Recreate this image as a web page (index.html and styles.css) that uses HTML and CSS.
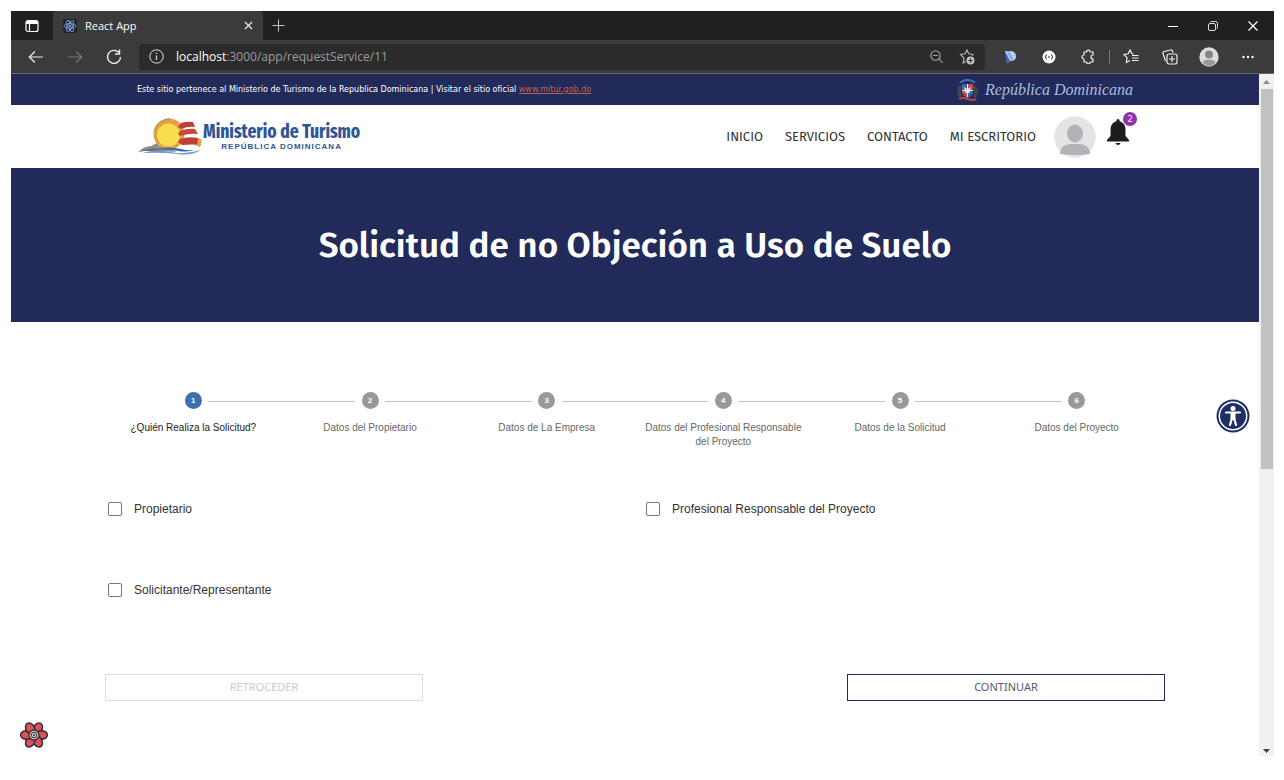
FILE: index.html
```html
<!DOCTYPE html>
<html lang="es">
<head>
    <meta charset="UTF-8">
    <title>React App</title>
    <link rel="stylesheet" href="styles.css">
</head>
<body>
    <div class="window">
        <div class="tabbar">
            <button class="icon-btn tab-actions" aria-label="Acciones de pestaña">
                <svg width="14" height="14" viewBox="0 0 14 14" fill="none" stroke="#fff" stroke-width="1.2"><rect x="1" y="1.500" width="12" height="11" rx="2"/><path d="M1 4.500h12M4.500 4.500v8"/><path d="M1.500 3h11" stroke-width="2"/></svg>
            </button>
            <div class="tab">
                <svg width="14" height="14" viewBox="0 0 14 14" fill="none" stroke="#7fa3dd" stroke-width="0.900"><rect width="14" height="14" fill="#20232a" stroke="none"/><ellipse cx="7" cy="7" rx="6" ry="2.400"/><ellipse cx="7" cy="7" rx="6" ry="2.400" transform="rotate(60 7 7)"/><ellipse cx="7" cy="7" rx="6" ry="2.400" transform="rotate(120 7 7)"/><circle cx="7" cy="7" r="1" fill="#7fa3dd"/></svg>
                <span class="tab-title">React App</span>
                <button class="icon-btn" aria-label="Cerrar pestaña">
                    <svg width="9" height="9" viewBox="0 0 9 9" stroke="#e8e8e8" stroke-width="1.300"><path d="M1 1l7 7M8 1l-7 7"/></svg>
                </button>
            </div>
            <button class="icon-btn new-tab" aria-label="Nueva pestaña">
                <svg width="13" height="13" viewBox="0 0 13 13" stroke="#c8c8c8"><path d="M6.500 0.500v12M0.500 6.500h12"/></svg>
            </button>
            <div class="win-controls">
                <button class="icon-btn" aria-label="Minimizar">
                    <svg width="10" height="10" viewBox="0 0 10 10" stroke="#fff"><path d="M0 5.500h10"/></svg>
                </button>
                <button class="icon-btn" aria-label="Restaurar">
                    <svg width="10" height="10" viewBox="0 0 10 10" fill="none" stroke="#ddd"><rect x="0.500" y="2.500" width="7" height="7" rx="1.500"/><path d="M2.500 1.500q0-1 1-1h4q2 0 2 2v4q0 1-1 1"/></svg>
                </button>
                <button class="icon-btn" aria-label="Cerrar">
                    <svg width="10" height="10" viewBox="0 0 10 10" stroke="#fff" stroke-width="1.200"><path d="M0.500 0.500l9 9M9.500 0.500l-9 9"/></svg>
                </button>
            </div>
        </div>
        <div class="toolbar">
            <div class="nav-buttons">
                <button class="icon-btn" aria-label="Atrás">
                    <svg width="16" height="14" viewBox="0 0 16 14" fill="none" stroke="#eee" stroke-width="1.200"><path d="M15 7H1.500M7 1.500L1.200 7L7 12.500"/></svg>
                </button>
                <button class="icon-btn" aria-label="Adelante">
                    <svg width="16" height="14" viewBox="0 0 16 14" fill="none" stroke="#777" stroke-width="1.200"><path d="M1 7h13.500M9 1.500l5.800 5.500L9 12.500"/></svg>
                </button>
                <button class="icon-btn" aria-label="Actualizar">
                    <svg width="16" height="16" viewBox="0 0 16 16" fill="none" stroke="#eee" stroke-width="1.400"><path d="M14.500 8A6.500 6.500 0 1 1 12.800 3.500M13.500 0.500v4.500H9"/></svg>
                </button>
            </div>
            <div class="address">
                <svg width="15" height="15" viewBox="0 0 15 15" fill="none" stroke="#ddd"><circle cx="7.500" cy="7.500" r="6.700"/><path d="M7.500 6.500v4.500M7.500 3.800v1.300" stroke-width="1.200"/></svg>
                <span class="url"><b>localhost</b>:3000/app/requestService/11</span>
                <button class="icon-btn" aria-label="Zoom">
                    <svg width="13" height="14" viewBox="0 0 13 14" fill="none" stroke="#a5a5ad" stroke-width="1.100"><circle cx="5.500" cy="5.500" r="4.700"/><path d="M3 5.500h5M9 9l3.500 4"/></svg>
                </button>
                <button class="icon-btn" aria-label="Agregar a favoritos">
                    <svg width="16" height="16" viewBox="0 0 16 16" fill="none" stroke="#b5b5bd" stroke-width="1.100"><path d="M13 6.500l1-1-4.200-.700L8 1L6.200 4.800L1.500 5.500L5 9l-.900 5L7 12.500"/><circle cx="11.500" cy="11.500" r="4" fill="#c4c4c4" stroke="none"/><path d="M11.500 9.300v4.400M9.300 11.500h4.400" stroke="#2b2b2b"/></svg>
                </button>
            </div>
            <div class="extensions">
                <button class="icon-btn" aria-label="Extensión">
                    <svg width="13" height="14" viewBox="0 0 13 14"><path d="M1 1h5q6 0 6 5.500Q12 11 6 11L3.500 13z" fill="#b8cdf0"/><path d="M1 1l5 10-3.500 2.500z" fill="#4465a8"/><path d="M3 1l4 9.500 2.500-.500L5 1z" fill="#86a5da"/></svg>
                </button>
                <button class="icon-btn" aria-label="Extensión JSON">
                    <svg width="14" height="14" viewBox="0 0 14 14" fill="none" stroke="#222"><circle cx="7" cy="7" r="6.500" fill="#fff" stroke="none"/><path d="M4.500 4.500Q2.500 7 4.500 9.500M9.500 4.500q2 2.500 0 5M6 7h2"/></svg>
                </button>
                <button class="icon-btn" aria-label="Extensiones">
                    <svg width="14" height="15" viewBox="0 0 14 15" fill="none" stroke="#eee" stroke-width="1.200"><path d="M3 3h2.500a1.800 1.800 0 0 1 3.600 0H12v3a1.800 1.800 0 0 0 0 4v3H9.200a1.800 1.800 0 0 1-3.600 0H3v-3a1.900 1.900 0 0 1 0-4z"/></svg>
                </button>
                <span class="divider"></span>
                <button class="icon-btn" aria-label="Favoritos">
                    <svg width="16" height="15" viewBox="0 0 16 15" fill="none" stroke="#eee" stroke-width="1.200"><path d="M10.500 5L9 4.700L7 1L5.200 4.800L1 5.500L4 8.700L3.400 13.500L7 11.500M9 6.500h6.500M9 9h6.500M9 11.500h6.500"/></svg>
                </button>
                <button class="icon-btn" aria-label="Colecciones">
                    <svg width="16" height="16" viewBox="0 0 16 16" fill="none" stroke="#eee" stroke-width="1.200"><path d="M3.500 12L1 4.500q-.500-1.500 1-2L8.500 1q1.500-.500 2 1l.500 1.500"/><rect x="5" y="5" width="10" height="10" rx="2"/><path d="M10 7v6M7 10h6"/></svg>
                </button>
                <button class="icon-btn" aria-label="Perfil">
                    <svg width="20" height="20" viewBox="0 0 20 20"><circle cx="10" cy="10" r="9.700" fill="#ddd"/><circle cx="10" cy="7.500" r="4" fill="#858585"/><path d="M3.500 15q2-2.500 6.500-2.500t6.500 2.500q-2 4-6.500 4t-6.500-4z" fill="#9a9a9a"/></svg>
                </button>
                <button class="icon-btn" aria-label="Más opciones">
                    <svg width="14" height="4" viewBox="0 0 14 4" fill="#fff"><circle cx="2.500" cy="2" r="1.200"/><circle cx="7" cy="2" r="1.200"/><circle cx="11.500" cy="2" r="1.200"/></svg>
                </button>
            </div>
        </div>
        <div class="viewport">
            <div class="page">
                <div class="topbar">
                    <p>Este sitio pertenece al Ministerio de Turismo de la Republica Dominicana | Visitar el sitio oficial <a href="#">www.mitur.gob.do</a></p>
                    <div class="country">
                        <svg width="21" height="22" viewBox="0 0 21 22" fill="none"><path d="M3 3.500Q10.500-1.500 18 3.500" stroke="#3c75b8" stroke-width="2"/><path d="M4 7Q0 12 4 18M17 7q4 5 0 11" stroke="#45454a" stroke-width="3.500"/><path d="M5 5h11v9q-2 4-5.500 5Q7 18 5 14z" fill="#3d62aa"/><path d="M11 5h5v6h-5zM5 11h5v7q-4-2-5-5z" fill="#c94848"/><path d="M10.500 5v13M5 11.500h11" stroke="#e9edf5"/><path d="M7 8l3.500 2L14 8l-1.500 6h-4z" fill="#dce5f2"/><path d="M2 20q4-2 8.500 0t8.500 0" stroke="#bd4343" stroke-width="2"/></svg>
                        <span>República Dominicana</span>
                    </div>
                </div>
                <header class="header">
                    <a href="#" class="brand">
                        <svg width="66" height="38" viewBox="0 0 66 38"><path d="M1 34q6-6 13-6l6-3 2 3q10 2 18 6l-18-1q-10-1-21 1z" fill="#8b8f94"/><circle cx="32" cy="16" r="15.500" fill="#e5a043"/><path d="M17 14Q20 2 33 0.500" fill="none" stroke="#a08d70"/><circle cx="31.500" cy="17" r="11.500" fill="#f5df4d"/><path d="M44 5q6-2 12-1l2 5q-7-1-14 2l-3-2z" fill="#bd3f38"/><path d="M43 13q8-3 15-2l3 5q-8-1-18 2l-2-2z" fill="#c9473a"/><path d="M43 21q9-3 18-1l3 7q-9-1-19 0l-4-3z" fill="#bd3f38"/><path d="M61 20l4 2-2 7-3-1z" fill="#e5a043"/><path d="M5 35q14-4 28-1t31-2q-10 6-24 4T5 35z" fill="#6e9bd0"/><path d="M19 31q13-3 25 0t17-1q-9 5-19 3t-23-2z" fill="#3767a8"/><path d="M4 33l12-3 9 2-12 1z" fill="#6c6c6c"/></svg>
                        <span class="brand-text">
                            <span class="brand-name">Ministerio de Turismo</span>
                            <span class="brand-sub">REPÚBLICA DOMINICANA</span>
                        </span>
                    </a>
                    <nav class="menu">
                        <a href="#">INICIO</a>
                        <a href="#">SERVICIOS</a>
                        <a href="#">CONTACTO</a>
                        <a href="#">MI ESCRITORIO</a>
                    </nav>
                    <button class="icon-btn avatar" aria-label="Mi cuenta">
                        <svg width="42" height="42" viewBox="0 0 42 42"><circle cx="21" cy="21" r="20.700" fill="#e2e4e6"/><ellipse cx="21" cy="17.500" rx="8" ry="9" fill="#b2b3b6"/><path d="M6 38q0-9 10-10h10q10 1 10 10-6 1-15 1T6 38z" fill="#b2b3b6"/></svg>
                    </button>
                    <button class="icon-btn bell" aria-label="Notificaciones">
                        <svg width="22" height="26" viewBox="0 0 22 26" fill="#1d1d1d"><path d="M11 0q1.700 0 1.700 2.200Q18.500 4 18.500 11v6l3.500 4v1.500H0V21l3.500-4v-6Q3.500 4 9.300 2.200 9.300 0 11 0zM8.500 24h5q-.500 2-2.500 2t-2.500-2z"/></svg>
                        <span class="badge">2</span>
                    </button>
                </header>
                <div class="hero">
                    <h1>Solicitud de no Objeción a Uso de Suelo</h1>
                </div>
                <form class="content">
                    <ol class="stepper">
                        <li class="step active"><span class="step-num">1</span><span class="step-label">¿Quién Realiza la Solicitud?</span></li>
                        <li class="step"><span class="step-num">2</span><span class="step-label">Datos del Propietario</span></li>
                        <li class="step"><span class="step-num">3</span><span class="step-label">Datos de La Empresa</span></li>
                        <li class="step"><span class="step-num">4</span><span class="step-label">Datos del Profesional Responsable del Proyecto</span></li>
                        <li class="step"><span class="step-num">5</span><span class="step-label">Datos de la Solicitud</span></li>
                        <li class="step"><span class="step-num">6</span><span class="step-label">Datos del Proyecto</span></li>
                    </ol>
                    <div class="options">
                        <label><input type="checkbox" name="propietario">Propietario</label>
                        <label><input type="checkbox" name="profesional">Profesional Responsable del Proyecto</label>
                        <label><input type="checkbox" name="solicitante">Solicitante/Representante</label>
                    </div>
                    <div class="actions">
                        <button type="button" disabled>RETROCEDER</button>
                        <button type="button">CONTINUAR</button>
                    </div>
                </form>
                <button class="icon-btn accessibility" aria-label="Accesibilidad">
                    <svg width="34" height="34" viewBox="0 0 34 34"><circle cx="17" cy="17" r="16.500" fill="#1f2f66"/><circle cx="17" cy="17" r="13.700" fill="none" stroke="#fff" stroke-width="1.500"/><circle cx="17" cy="9.500" r="2.500" fill="#fff"/><path d="M10 13.500h14M17 14v6M16 19l-2 7M18 19l2 7" stroke="#fff" stroke-width="2.200" stroke-linecap="round"/><path d="M14.500 13.500h5v7h-5z" fill="#fff"/></svg>
                </button>
                <button class="icon-btn devtools" aria-label="React Query Devtools">
                    <svg width="28" height="28" viewBox="0 0 28 28"><g fill="#e54d50" stroke="#2a3044" stroke-width="1.500"><ellipse cx="14" cy="6.500" rx="4.300" ry="5.900" transform="rotate(30 14 14)"/><ellipse cx="14" cy="6.500" rx="4.300" ry="5.900" transform="rotate(90 14 14)"/><ellipse cx="14" cy="6.500" rx="4.300" ry="5.900" transform="rotate(150 14 14)"/><ellipse cx="14" cy="6.500" rx="4.300" ry="5.900" transform="rotate(210 14 14)"/><ellipse cx="14" cy="6.500" rx="4.300" ry="5.900" transform="rotate(270 14 14)"/><ellipse cx="14" cy="6.500" rx="4.300" ry="5.900" transform="rotate(330 14 14)"/></g><circle cx="14" cy="14" r="5" fill="#d8c9b0" stroke="#2a3044" stroke-width="1.300"/><circle cx="14" cy="14" r="2.800" fill="none" stroke="#2a3044"/><circle cx="14" cy="14" r="1" fill="#2a3044"/></svg>
                </button>
            </div>
            <div class="scrollbar">
                <svg width="7" height="4" viewBox="0 0 7 4" fill="#8a8a8a"><path d="M0 4l3.500-4L7 4z"/></svg>
                <div class="track"><div class="thumb"></div></div>
                <svg width="7" height="4" viewBox="0 0 7 4" fill="#444"><path d="M0 0l3.500 4L7 0z"/></svg>
            </div>
        </div>
    </div>
</body>
</html>
```
FILE: styles.css
```css
*{
    box-sizing: border-box;
    margin: 0;
    padding: 0;
}
body{
    height: 100vh;
    padding: 11px 10px 24px 11px;
    background-color: white;
    font-family: "Liberation Sans", Arial, sans-serif;
}
svg{
    display: block;
    flex-shrink: 0;
}
.icon-btn{
    display: flex;
    align-items: center;
    justify-content: center;
    background: none;
    border: 0;
}
.window{
    display: flex;
    flex-direction: column;
    height: 100%;
}

/* browser chrome */
.tabbar{
    display: flex;
    align-items: center;
    height: 29px;
    background-color: #202020;
}
.tab-actions{
    width: 42px;
}
.tab{
    display: flex;
    align-items: center;
    gap: 8px;
    width: 210px;
    height: 100%;
    padding: 0 10px;
    border-radius: 4px 4px 0 0;
    background-color: #3b3b3b;
    color: white;
    font: 11px "Open Sans", "Noto Sans", sans-serif;
}
.tab-title{
    flex: 1;
}
.new-tab{
    width: 30px;
}
.win-controls{
    display: flex;
    gap: 30px;
    margin-left: auto;
    padding-right: 16px;
}
.toolbar{
    display: flex;
    align-items: center;
    height: 34px;
    background-color: #3b3b3b;
    border-bottom: 1px solid #66666c;
}
.nav-buttons{
    display: flex;
    gap: 23px;
    padding: 0 17px;
}
.address{
    display: flex;
    align-items: center;
    gap: 16px;
    flex: 1;
    height: 26px;
    padding: 0 10px;
    border-radius: 3px;
    background-color: #2b2b2b;
    color: #9b9b9b;
    font: 12px "Open Sans", "Noto Sans", sans-serif;
}
.url{
    flex: 1;
    margin-left: -4px;
}
.url b{
    color: white;
    font-weight: 400;
}
.extensions{
    display: flex;
    align-items: center;
    gap: 19px;
    padding: 0 16px 0 15px;
}
.extensions .icon-btn{
    width: 20px;
}
.divider{
    width: 1px;
    height: 14px;
    margin: 0 -8px;
    background-color: #77777c;
}

/* page */
.viewport{
    display: flex;
    flex: 1;
    min-height: 0;
}
.page{
    position: relative;
    flex: 1;
}
.topbar{
    display: flex;
    align-items: center;
    justify-content: space-between;
    height: 31px;
    padding: 0 126px;
    background-color: #222a59;
    color: white;
    font: 8px "DejaVu Sans", sans-serif;
}
.topbar a{
    color: #c75f4c;
}
.country{
    display: flex;
    align-items: center;
    gap: 7px;
    color: #a9bddd;
    font: italic 16px "Edwardian Script ITC", "Liberation Serif", serif;
}
.header{
    display: flex;
    align-items: center;
    height: 63px;
    padding: 0 130px 0 126px;
}
.brand{
    display: flex;
    align-items: center;
    color: #2f5597;
    text-decoration: none;
}
.brand-text{
    display: flex;
    flex-direction: column;
    align-items: center;
}
.brand-name{
    font: bold 19px/20px "Fira Sans Extra Condensed", "Fira Sans Condensed", "Roboto Condensed", "Open Sans Condensed", sans-serif;
}
.brand-sub{
    font-size: 8px;
    font-weight: bold;
    line-height: 10px;
    letter-spacing: 1px;
}
.menu{
    display: flex;
    gap: 22px;
    margin-left: auto;
    font: 13px "Fira Sans", "Noto Sans", sans-serif;
}
.menu a{
    color: #333;
    text-decoration: none;
}
.avatar{
    margin: 0 11px 0 18px;
}
.bell{
    position: relative;
    margin-bottom: 9px;
}
.badge{
    position: absolute;
    top: -7px;
    right: -8px;
    width: 14px;
    border-radius: 50%;
    background-color: #8e35ad;
    color: white;
    font: 9px/14px "Noto Sans", sans-serif;
    text-align: center;
}
.hero{
    display: flex;
    align-items: center;
    justify-content: center;
    height: 154px;
    background-color: #222a59;
    color: white;
}
.hero h1{
    font: 600 35px "Fira Sans", "Noto Sans", sans-serif;
}
.content{
    padding: 70px 94px 0;
}
.stepper{
    display: flex;
    list-style: none;
    min-height: 90px;
}
.step{
    position: relative;
    display: flex;
    flex: 1;
    flex-direction: column;
    align-items: center;
    gap: 12px;
    color: #666;
}
.step + .step::before{
    content: "";
    position: absolute;
    top: 9px;
    left: calc(-50% + 15px);
    right: calc(50% + 15px);
    border-top: 1px solid #c4c4c4;
}
.step-num{
    width: 17px;
    border-radius: 50%;
    background-color: #999;
    color: white;
    font-size: 8px;
    font-weight: bold;
    line-height: 17px;
    text-align: center;
}
.step-label{
    padding: 0 6px;
    font-size: 10px;
    line-height: 14px;
    text-align: center;
}
.active{
    color: #222;
}
.active .step-num{
    background-color: #3d70b2;
}
.options{
    display: grid;
    grid-template-columns: 1fr 1fr;
    gap: 55px 22px;
    padding: 14px 3px 0;
}
.options label{
    display: flex;
    align-items: center;
    gap: 12px;
    height: 26px;
    color: #333;
    font-size: 12px;
}
.options input{
    width: 14px;
    height: 14px;
    appearance: none;
    border: 1px solid #777;
    border-radius: 2px;
}
.options input:checked{
    background-color: #3d70b2;
}
.actions{
    display: flex;
    justify-content: space-between;
    padding-top: 71px;
}
.actions button{
    width: 30%;
    height: 27px;
    padding-bottom: 2px;
    background-color: white;
    border: 1px solid #222a59;
    color: #555b70;
    font: 11px "Noto Sans", sans-serif;
}
.actions button:disabled{
    border-color: #ddd;
    color: #ccc;
}
.accessibility{
    position: absolute;
    top: 325px;
    right: 9px;
}
.devtools{
    position: absolute;
    bottom: 7px;
    left: 9px;
}
.scrollbar{
    display: flex;
    flex-direction: column;
    align-items: center;
    gap: 5px;
    width: 15px;
    padding: 6px 0 3px;
    background-color: #f1f1f1;
}
.track{
    flex: 1;
    width: 12px;
}
.thumb{
    height: 58%;
    background-color: #c1c1c1;
}
```
